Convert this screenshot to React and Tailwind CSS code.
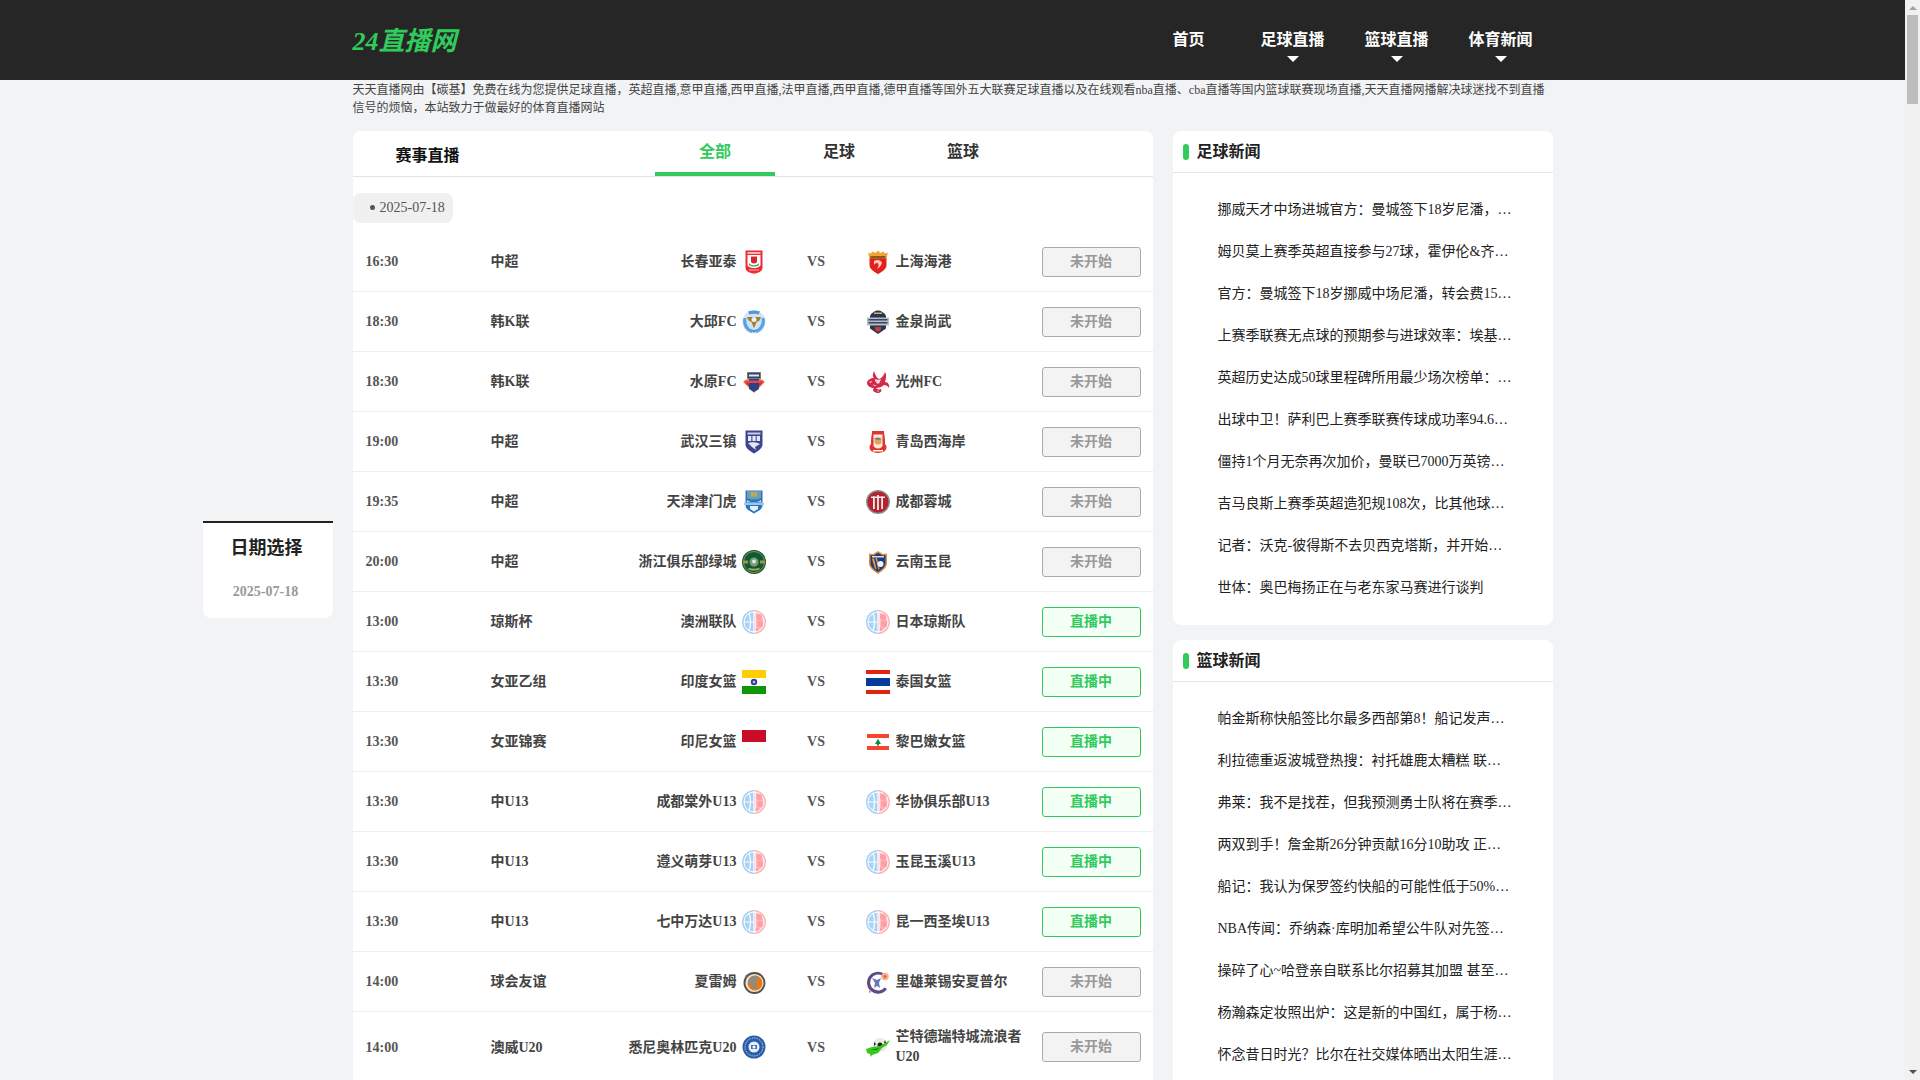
const Shield = ({ children }) => (
  <svg viewBox="0 0 24 24" className="w-6 h-6 shrink-0" aria-hidden="true">{children}</svg>
);

const logos = {
  changchun: (
    <Shield>
      <path d="M3.500 .5h17v17.500c0 3-4.500 5.500-8.500 5.500s-8.500-2.500-8.500-5.500z" fill="#ee2b34" />
      <path d="M5.500 5h13v10c0 1.500-3 3-6.500 3s-6.500-1.500-6.500-3z" fill="#fff" />
      <path d="M5.500 2h13v2h-13z" fill="#f9b7b0" />
      <path d="M9 6.500h6v5c0 1-1.500 2-3 2s-3-1-3-2z" fill="#d8262e" />
      <path d="M7 13c2 3 8 3 10 0v2c-2 2-8 2-10 0z" fill="#4fa765" />
      <path d="M7 19.500h10v1H7z" fill="#f9b7b0" />
    </Shield>
  ),
  daegu: (
    <Shield>
      <circle cx="12" cy="12" r="11.500" fill="#cfe5f6" />
      <path d="M1.500 8c-1.500 6 1 12 8 15l1.500-2.500c-5-2-7.500-7-6.500-12.500z" fill="#5aa3e0" />
      <path d="M22.500 8c1.500 6-1 12-8 15l-1.500-2.500c5-2 7.500-7 6.500-12.500z" fill="#5aa3e0" />
      <path d="M6 1.500c4-1.500 8-1.500 12 0l-1.500 3c-3-1-6-1-9 0z" fill="#4e97d8" />
      <path d="M5 7h14l-1.500 3.500-3 1.500-2.500 6.500-2.500-6.500-3-1.500z" fill="#a87a2c" />
      <circle cx="12" cy="9.500" r="2.500" fill="#e8f1f8" />
      <path d="M8 19l4 4 4-4-4 1z" fill="#4a97d8" />
    </Shield>
  ),
  suwon: (
    <Shield>
      <path d="M1 12l4-3V2h14v7l4 3-3 3-8 8-8-8z" fill="#f0a04a" />
      <path d="M5.500 2.500h13v6h-13z" fill="#24477f" />
      <path d="M7 4.500h10v2H7z" fill="#dfe6f0" />
      <path d="M2.500 12h19l-2.500 3-7 7-7-7z" fill="#d3303f" />
      <path d="M7 9h10v10l-5 3-5-3z" fill="#2b4386" />
      <path d="M2.500 10.500h19v2.500h-19z" fill="#e74052" />
    </Shield>
  ),
  wuhan: (
    <Shield>
      <path d="M3.500 .5h17v14c0 4-5 7-8.500 9-3.500-2-8.500-5-8.500-9z" fill="#3d4590" />
      <path d="M5.500 2.500h13v2h-13z" fill="#c9cbe3" />
      <path d="M6 6h3.300v5H6zM10.400 6h3.300v5h-3.300zM14.700 6H18v5h-3.300z" fill="#e6e7f2" />
      <path d="M6 13c3-1 9-1 12 1l-5 3 1 3-4-3z" fill="#e6e7f2" />
    </Shield>
  ),
  tianjin: (
    <Shield>
      <path d="M3.500 .5h17v15c0 4-5 6-8.500 8-3.500-2-8.500-4-8.500-8z" fill="#2677c6" />
      <path d="M5 1h14v7c-3 2-11 2-14 0z" fill="#6f9caf" />
      <path d="M9 2h6v4.500H9z" fill="#b9a968" />
      <path d="M2 12.500h20v2.500H2z" fill="#9fc8dc" />
      <path d="M5 10c3 3 11 3 14 0v2H5z" fill="#dcebf2" />
      <path d="M8 16h8v3l-4 2.500L8 19z" fill="#e6f0f6" />
    </Shield>
  ),
  zhejiang: (
    <Shield>
      <circle cx="12" cy="12" r="12" fill="#0e5a33" />
      <circle cx="12" cy="12" r="10.500" fill="none" stroke="#8f8c4a" strokeWidth="1" />
      <path d="M1 10.500h5v3H1zM18 10.500h5v3h-5z" fill="#9d9550" />
      <circle cx="12" cy="12" r="4.500" fill="#7b9a78" />
      <circle cx="12" cy="11.500" r="2" fill="#dfe6d8" />
      <path d="M6 19c3 2 9 2 12 0l-1-1c-3 1-7 1-10 0z" fill="#b0a55a" />
    </Shield>
  ),
  shanghai: (
    <Shield>
      <path d="M3.500 8h17v7c0 4-4.500 7-8.500 9-4-2-8.500-5-8.500-9z" fill="#e3201e" />
      <path d="M2 2.500l2.500 1 2.500-2 2.500 1.500 2.500-2.500 2.500 2.500 2.500-1.500 2.500 2 2.500-1-1.500 6h-17z" fill="#f3a436" />
      <path d="M4.500 6h15v2.500h-15z" fill="#8a5a1f" />
      <path d="M8 11c3-2 7-1 8 2-1 3-3 5-5 6 2-3 2-6 0-6-1 0-2 .5-3 2z" fill="#ffc9b8" />
    </Shield>
  ),
  gimcheon: (
    <Shield>
      <path d="M12 .5c3 0 6 2 8 5v13l-8 5.500-8-5.500v-13c2-3 5-5 8-5z" fill="#2a3550" />
      <path d="M1 7.500h22v8H1z" fill="#b4bac6" />
      <path d="M2.500 9h19v1.500h-19zM2.500 12h19v1.500h-19z" fill="#3a4560" />
      <path d="M9 17h6v3l-3 2-3-2z" fill="#c63a46" />
      <path d="M8 2.500h8v1.500H8z" fill="#d1b070" />
    </Shield>
  ),
  gwangju: (
    <Shield>
      <path d="M8 1c-1 3-2 5 0 7-3 0-7 2-7 5 0 3 4 5 7 5-2 2-1 4 3 5 4 0 5-2 4-4-2 1-4 0-5-1 3 0 6-1 8-3 2 0 4 1 5 3 1-3-1-6-4-6 1-3 2-7 0-10-1 3-3 6-6 7-2-1-4-4-5-8z" fill="#d42a4a" />
      <path d="M9 9c2 1 4 1 6 0-1 2-1 4-3 5-2-1-3-3-3-5zM6 14c1 1 3 1 4 1l-1 1.500zM3 12l3-1-1 2zM11 20l2 1-1 1z" fill="#f8d7dd" />
    </Shield>
  ),
  qingdao: (
    <Shield>
      <path d="M6 1h12v2c1 4 1 8 1 11 2 2 2 4 0 7-2 1-5 2-7 2s-5-1-7-2c-2-3-2-5 0-7 0-3 0-7 1-11z" fill="#e2342e" />
      <path d="M7.500 4.500h9v11c0 1-2 3-4.500 3s-4.500-2-4.500-3z" fill="#fbe9df" />
      <circle cx="12" cy="11" r="3.500" fill="#e9a34d" />
      <path d="M8 9c3-2 5-1 8 0-3 1-5 1-8 0z" fill="#5c7ea8" />
      <path d="M7 20h10v1.500H7z" fill="#fff" />
    </Shield>
  ),
  chengdu: (
    <Shield>
      <circle cx="12" cy="12" r="12" fill="#8f8a8a" />
      <circle cx="12" cy="12" r="10.500" fill="#b3232f" />
      <path d="M7 6.500h1.800V19H7zM11.100 5h1.800v15h-1.800zM15.200 6.500H17V19h-1.800z" fill="#f2e9e9" />
      <path d="M5 6.500h14v1.500H5z" fill="#f2e9e9" />
    </Shield>
  ),
  yunnan: (
    <Shield>
      <path d="M3 3.500l4 .5 5-3 5 3 4-.5V13c0 5-5 8-9 11-4-3-9-6-9-11z" fill="#e98d34" />
      <path d="M4.500 5l3 .5 4.500-2.800 4.500 2.800 3-.5V13c0 4-4 7-7.500 9-3.500-2-7.500-5-7.500-9z" fill="#173d85" />
      <path d="M6 9l3 10h1.500L8 8zM9.500 8l3 12 1-1-2.500-11z" fill="#ed9a3c" />
      <circle cx="14.500" cy="14" r="3" fill="#eef2f8" />
      <path d="M6 6h12v1.500H6z" fill="#d8deeb" />
    </Shield>
  ),
  basket: (
    <Shield>
      <path d="M12 0a12 12 0 0 0 0 24z" fill="#a9d2f5" />
      <path d="M12 0a12 12 0 0 1 0 24z" fill="#fdb6ba" />
      <circle cx="12" cy="12" r="10" fill="none" stroke="#fff" strokeWidth="1" />
      <path d="M12 1v22M2 12h10" stroke="#fff" strokeWidth="1.200" />
      <path d="M7 3c2 6 2 12 0 18" fill="none" stroke="#fff" strokeWidth="1.200" />
      <circle cx="17" cy="7" r="3" fill="#fda0a6" />
      <circle cx="18" cy="14" r="3.200" fill="#fda0a6" />
      <circle cx="14.500" cy="19.500" r="1.800" fill="#fda0a6" />
      <path d="M13 2c1 8 1 14 0 20" fill="none" stroke="#fff" strokeWidth=".8" />
    </Shield>
  ),
  india: (
    <Shield>
      <path d="M0 0h24v8H0z" fill="#ffce00" />
      <path d="M0 8h24v8H0z" fill="#fff" />
      <path d="M0 16h24v8H0z" fill="#0f9707" />
      <circle cx="12" cy="12" r="3.200" fill="#2c3f8f" />
      <circle cx="12" cy="12" r="1.200" fill="#c8d0ea" />
    </Shield>
  ),
  thailand: (
    <Shield>
      <path d="M0 0h24v4H0zM0 20h24v4H0z" fill="#e2230f" />
      <path d="M0 4h24v4H0zM0 16h24v4H0z" fill="#fff" />
      <path d="M0 8h24v8H0z" fill="#063a9b" />
    </Shield>
  ),
  indonesia: (
    <Shield>
      <path d="M0 0h24v12H0z" fill="#ca0c2b" />
      <path d="M0 12h24v12H0z" fill="#fbfdfb" />
    </Shield>
  ),
  lebanon: (
    <Shield>
      <path d="M1 4h22v16H1z" fill="#fff" />
      <path d="M1 4h22v4H1zM1 16h22v4H1z" fill="#f6452e" />
      <path d="M12 8.800l3 5.200h-2v1.500h-2V14H9z" fill="#0d8a3c" />
    </Shield>
  ),
  shaleim: (
    <Shield>
      <circle cx="12" cy="12.500" r="11" fill="#e9e6df" />
      <circle cx="12.500" cy="13" r="10" fill="none" stroke="#57514a" strokeWidth="1.800" />
      <circle cx="13" cy="13" r="7.500" fill="#e87a10" />
      <path d="M7 10c1-3 4-5 8-4l2 3-3 2 1 7-4 1-2-4-3-1z" fill="#8f8b84" />
      <path d="M3 6l3-2 1 2-3 2z" fill="#6c675f" />
    </Shield>
  ),
  kaohsiung: (
    <Shield>
      <path d="M18 3.500A11 11 0 1 0 21 19l-2.500-1.500A8 8 0 1 1 16 5.500z" fill="#5d4a86" />
      <path d="M6 8l5 2 4-2-2 5 1 5-3-2-3 2 1-5z" fill="#6b78b5" />
      <circle cx="19" cy="6.500" r="3.800" fill="#f6b092" />
      <circle cx="19" cy="6.500" r="1.500" fill="#ea5a3c" />
      <path d="M3 20l2 2-2 1z" fill="#e86a4c" />
    </Shield>
  ),
  sydney: (
    <Shield>
      <circle cx="12" cy="12" r="11.500" fill="#2a5ea8" />
      <circle cx="12" cy="12" r="9" fill="none" stroke="#c4d5ec" strokeWidth="1" strokeDasharray="1.500 1" />
      <circle cx="12" cy="12" r="5.500" fill="#e6eef8" />
      <path d="M9 10h6v4H9z" fill="#3f74bb" />
      <circle cx="12" cy="12" r="1.500" fill="#fff" />
    </Shield>
  ),
  manta: (
    <Shield>
      <circle cx="14" cy="10" r="7" fill="#e8e8e4" />
      <circle cx="14" cy="10" r="2.500" fill="#1f1f1f" />
      <path d="M8 7l2 2-2 2zM19 5l1 3-2 0zM11 15l2-1 1 2z" fill="#1f1f1f" />
      <path d="M0 14l6-2 8-1 10-6-3 5-5 3-4 5-6 2-1 2-1-3-3-1z" fill="#37c81e" />
      <path d="M5 15l8-2 2-1-5 3z" fill="#0f6a10" />
    </Shield>
  ),
};

const rows = [
  ["16:30", "中超", "长春亚泰", "changchun", "上海海港", "shanghai", 0],
  ["18:30", "韩K联", "大邱FC", "daegu", "金泉尚武", "gimcheon", 0],
  ["18:30", "韩K联", "水原FC", "suwon", "光州FC", "gwangju", 0],
  ["19:00", "中超", "武汉三镇", "wuhan", "青岛西海岸", "qingdao", 0],
  ["19:35", "中超", "天津津门虎", "tianjin", "成都蓉城", "chengdu", 0],
  ["20:00", "中超", "浙江俱乐部绿城", "zhejiang", "云南玉昆", "yunnan", 0],
  ["13:00", "琼斯杯", "澳洲联队", "basket", "日本琼斯队", "basket", 1],
  ["13:30", "女亚乙组", "印度女篮", "india", "泰国女篮", "thailand", 1],
  ["13:30", "女亚锦赛", "印尼女篮", "indonesia", "黎巴嫩女篮", "lebanon", 1],
  ["13:30", "中U13", "成都棠外U13", "basket", "华协俱乐部U13", "basket", 1],
  ["13:30", "中U13", "遵义萌芽U13", "basket", "玉昆玉溪U13", "basket", 1],
  ["13:30", "中U13", "七中万达U13", "basket", "昆一西圣埃U13", "basket", 1],
  ["14:00", "球会友谊", "夏雷姆", "shaleim", "里雄莱锡安夏普尔", "kaohsiung", 0],
  ["14:00", "澳威U20", "悉尼奥林匹克U20", "sydney", "芒特德瑞特城流浪者U20", "manta", 0],
];

const football = [
  "挪威天才中场进城官方：曼城签下18岁尼潘，…",
  "姆贝莫上赛季英超直接参与27球，霍伊伦&齐…",
  "官方：曼城签下18岁挪威中场尼潘，转会费15…",
  "上赛季联赛无点球的预期参与进球效率：埃基…",
  "英超历史达成50球里程碑所用最少场次榜单：…",
  "出球中卫！萨利巴上赛季联赛传球成功率94.6…",
  "僵持1个月无奈再次加价，曼联已7000万英镑…",
  "吉马良斯上赛季英超造犯规108次，比其他球…",
  "记者：沃克-彼得斯不去贝西克塔斯，并开始…",
  "世体：奥巴梅扬正在与老东家马赛进行谈判",
];

const basketball = [
  "帕金斯称快船签比尔最多西部第8！船记发声…",
  "利拉德重返波城登热搜：衬托雄鹿太糟糕 联…",
  "弗莱：我不是找茬，但我预测勇士队将在赛季…",
  "两双到手！詹金斯26分钟贡献16分10助攻 正…",
  "船记：我认为保罗签约快船的可能性低于50%…",
  "NBA传闻：乔纳森·库明加希望公牛队对先签…",
  "操碎了心~哈登亲自联系比尔招募其加盟 甚至…",
  "杨瀚森定妆照出炉：这是新的中国红，属于杨…",
  "怀念昔日时光？比尔在社交媒体晒出太阳生涯…",
];

const NewsPanel = ({ title, items, className = "" }) => (
  <section className={`bg-white rounded-lg ${className}`}>
    <h2 className="h-[42px] border-b border-[#e5e5e5] flex items-center pl-[10px] text-[16px] font-bold leading-[40px] text-[#222]">
      <span className="w-[6px] h-4 rounded-full bg-[#30cb5c] mr-2" />
      {title}
    </h2>
    <ul className="pt-4 pb-4 pl-[45px]">
      {items.map((t) => (
        <li key={t} className="h-[42px] leading-[42px] text-[14px] text-[#222] whitespace-nowrap">{t}</li>
      ))}
    </ul>
  </section>
);

const NavItem = ({ label, caret }) => (
  <li className="w-[104px] h-20 flex flex-col items-center">
    <span className="mt-[27px] text-[16px] leading-[25px] font-bold text-white">{label}</span>
    {caret && <span className="mt-1 w-0 h-0 border-x-[6px] border-t-[6px] border-x-transparent border-t-white" />}
  </li>
);

const Scrollbar = () => (
  <div className="fixed top-0 right-0 w-[15px] h-screen bg-[#f1f1f1] flex flex-col items-center" aria-hidden="true">
    <span className="mt-[6px] w-0 h-0 border-x-[4px] border-b-[4px] border-x-transparent border-b-[#a3a3a3]" />
    <span className="mt-[5px] w-[11px] h-[89px] bg-[#bdbdbd]" />
    <span className="mt-auto mb-[6px] w-0 h-0 border-x-[4px] border-t-[4px] border-x-transparent border-t-[#505050]" />
  </div>
);

export default function App() {
  return (
    <div className="pr-[15px] min-h-screen bg-[#f2f3f5] font-['Liberation_Serif','Noto_Sans_CJK_SC',serif] text-[#333]">
      <header className="h-20 bg-[#262626]">
        <div className="w-[1200px] mx-auto h-20 flex justify-between">
          <a className="pt-[3px] text-[26px] italic font-bold text-[#30cb5c] leading-[77px]">24直播网</a>
          <ul className="flex">
            <NavItem label="首页" />
            <NavItem label="足球直播" caret />
            <NavItem label="篮球直播" caret />
            <NavItem label="体育新闻" caret />
          </ul>
        </div>
      </header>

      <div className="w-[1200px] mx-auto">
        <p className="pt-px text-[12px] leading-[18px] text-[#444]">
          天天直播网由【碳基】免费在线为您提供足球直播，英超直播,意甲直播,西甲直播,法甲直播,西甲直播,德甲直播等国外五大联赛足球直播以及在线观看nba直播、cba直播等国内篮球联赛现场直播,天天直播网播解决球迷找不到直播信号的烦恼，本站致力于做最好的体育直播网站
        </p>

        <div className="relative mt-[14px] flex gap-5 items-start">
          <aside className="absolute top-[390px] right-full mr-5 w-[130px] h-[97px] bg-white border-t-2 border-[#222] rounded-b-lg text-center">
            <h3 className="mt-[13px] pr-[2px] text-[18px] leading-6 font-bold text-[#222]">日期选择</h3>
            <p className="mt-[22px] pr-[4px] text-[14px] leading-5 font-bold text-[#999]">2025-07-18</p>
          </aside>

          <main className="w-[800px] bg-white rounded-t-lg">
            <div className="h-[46px] border-b border-[#e2e2e2] flex">
              <h2 className="w-[302.5px] pl-[43px] pt-[13px] text-[16px] leading-6 font-bold text-[#111]">赛事直播</h2>
              <div className="flex gap-1 h-[45px]">
                <span className="w-[120px] h-[45px] border-b-4 border-[#30cb5c] text-center text-[16px] leading-[41px] font-bold text-[#30cb5c]">全部</span>
                <span className="w-[120px] text-center text-[16px] leading-[41px] font-bold text-[#333]">足球</span>
                <span className="w-[120px] text-center text-[16px] leading-[41px] font-bold text-[#333]">篮球</span>
              </div>
            </div>

            <div className="pt-4 pb-[9px]">
              <span className="w-[100px] h-[30px] pb-px bg-[#f0f0f0] rounded-lg flex items-center pl-[17px] text-[14px] text-[#555]">
                <span className="w-[5px] h-[5px] rounded-full bg-[#555] mr-[5px]" />
                2025-07-18
              </span>
            </div>

            {rows.map((r, i) => (
              <div key={i} className={`flex items-center border-b border-[#eee] text-[14px] text-[#444] ${i === 13 ? "py-[15px]" : "min-h-[60px] py-[10px]"}`}>
                <span className="w-[138px] pl-[13px] font-bold text-[#555]">{r[0]}</span>
                <span className="w-[100px] font-bold">{r[1]}</span>
                <span className="w-[175px] flex items-center justify-end gap-[5px] font-bold text-right">
                  {r[2]}
                  {logos[r[3]]}
                </span>
                <span className="w-[100px] pl-px text-center font-bold text-[#555]">VS</span>
                <span className="w-[176px] flex items-center gap-[6px] font-bold leading-5">
                  {logos[r[5]]}
                  <span className="w-[136px]">{r[4]}</span>
                </span>
                {r[6] ? (
                  <span className="w-[99px] h-[30px] leading-[28px] text-center border border-[#30cb5c] rounded-[3px] bg-[#f4fff6] text-[#30cb5c] font-bold">直播中</span>
                ) : (
                  <span className="w-[99px] h-[30px] leading-[28px] text-center border border-[#aaa] rounded-[3px] bg-[#f3f3f3] text-[#999] font-bold">未开始</span>
                )}
              </div>
            ))}
          </main>

          <div className="w-[380px]">
            <NewsPanel title="足球新闻" items={football} />
            <NewsPanel title="篮球新闻" items={basketball} className="mt-[15px]" />
          </div>
        </div>
      </div>
      <Scrollbar />
    </div>
  );
}
